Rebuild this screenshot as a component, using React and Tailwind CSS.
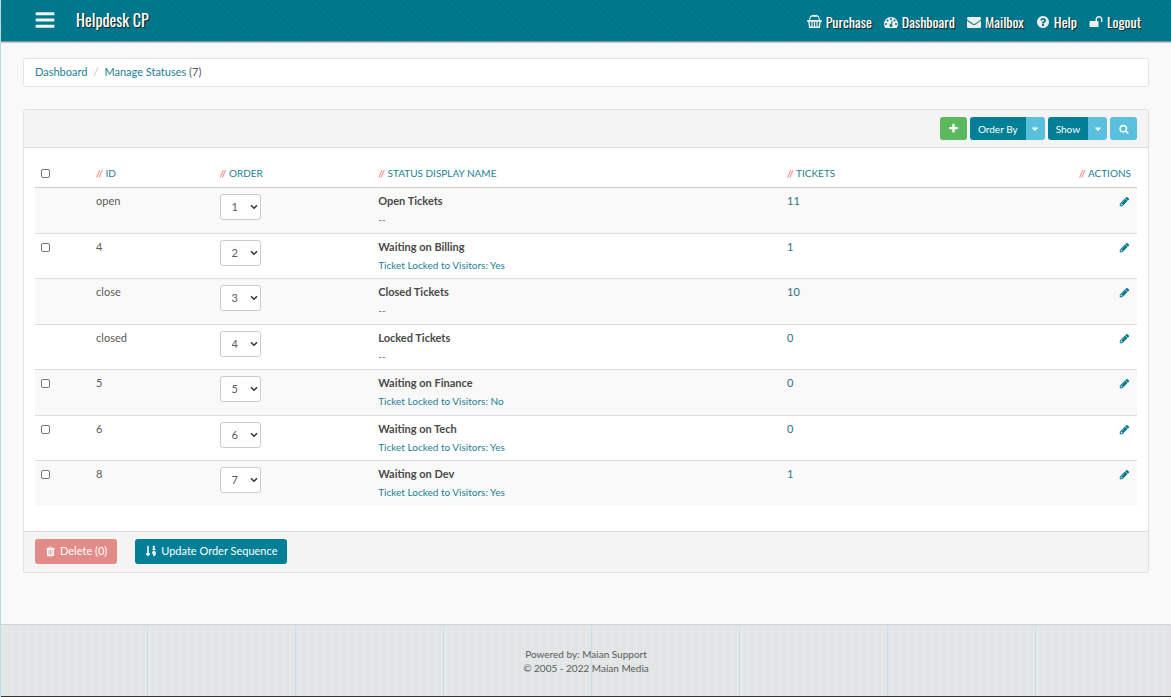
import { useState } from "react";
import { FaSortNumericDown } from "react-icons/fa";

const ICONS = {
    bars: "M1664 1344v128q0 26-19 45t-45 19h-1408q-26 0-45-19t-19-45v-128q0-26 19-45t45-19h1408q26 0 45 19t19 45zm0-512v128q0 26-19 45t-45 19h-1408q-26 0-45-19t-19-45v-128q0-26 19-45t45-19h1408q26 0 45 19t19 45zm0-512v128q0 26-19 45t-45 19h-1408q-26 0-45-19t-19-45v-128q0-26 19-45t45-19h1408q26 0 45 19t19 45z",
    dashboard:
        "M384 1152q0-53-37.5-90.5t-90.5-37.5-90.5 37.5-37.5 90.5 37.5 90.5 90.5 37.5 90.5-37.5 37.5-90.5zm192-448q0-53-37.5-90.5t-90.5-37.5-90.5 37.5-37.5 90.5 37.5 90.5 90.5 37.5 90.5-37.5 37.5-90.5zm428 481l101-382q6-26-7.5-48.5t-38.5-29.5-48 6.5-30 39.5l-101 382q-60 5-107 43.5t-63 98.5q-20 77 20 146t117 89 146-20 89-117q16-60-6-117t-72-91zm660-33q0-53-37.5-90.5t-90.5-37.5-90.5 37.5-37.5 90.5 37.5 90.5 90.5 37.5 90.5-37.5 37.5-90.5zm-640-640q0-53-37.5-90.5t-90.5-37.5-90.5 37.5-37.5 90.5 37.5 90.5 90.5 37.5 90.5-37.5 37.5-90.5zm448 192q0-53-37.5-90.5t-90.5-37.5-90.5 37.5-37.5 90.5 37.5 90.5 90.5 37.5 90.5-37.5 37.5-90.5zm320 448q0 261-141 483-19 29-54 29h-1402q-35 0-54-29-141-221-141-483 0-182 71-348t191-286 286-191 348-71 348 71 286 191 191 286 71 348z",
    envelope:
        "M1792 710v794q0 66-47 113t-113 47h-1472q-66 0-113-47t-47-113v-794q44 49 101 87 362 246 497 345 57 42 92.5 65.5t94.5 48 110 24.5h2q51 0 110-24.5t94.5-48 92.5-65.5q170-123 498-345 57-39 100-87zm0-294q0 79-49 151t-122 123q-376 261-468 325-10 7-42.5 31t-54 38.5-52 32.5-57.5 27-50 9h-2q-23 0-50-9t-57.5-27-52-32.5-54-38.5-42.5-31q-91-64-262-182.5t-205-142.5q-62-42-117-115.5t-55-136.5q0-78 41.5-130t118.5-52h1472q65 0 112.5 47t47.5 113z",
    help: "M1024 1376v-192q0-14-9-23t-23-9h-192q-14 0-23 9t-9 23v192q0 14 9 23t23 9h192q14 0 23-9t9-23zm256-672q0-88-55.5-163t-138.5-116-170-41q-243 0-371 213-15 24 8 42l132 100q7 6 19 6 16 0 25-12 53-68 86-92 34-24 86-24 48 0 85.5 26t37.5 59q0 38-20 61t-68 45q-63 28-115.5 86.5t-52.5 125.5v36q0 14 9 23t23 9h192q14 0 23-9t9-23q0-19 21.5-49.5t54.5-49.5q32-18 49-28.5t46-35 44.5-48 28-60.5 12.5-81zm384 192q0 209-103 385.5t-279.5 279.5-385.5 103-385.5-103-279.5-279.5-103-385.5 103-385.5 279.5-279.5 385.5-103 385.5 103 279.5 279.5 103 385.5z",
    unlock:
        "M1728 576v256q0 26-19 45t-45 19h-64q-26 0-45-19t-19-45v-256q0-106-75-181t-181-75-181 75-75 181v192h96q40 0 68 28t28 68v576q0 40-28 68t-68 28h-960q-40 0-68-28t-28-68v-576q0-40 28-68t68-28h672v-192q0-185 131.5-316.5t316.5-131.5 316.5 131.5 131.5 316.5z",
    plus: "M1600 736v192q0 40-28 68t-68 28h-416v416q0 40-28 68t-68 28h-192q-40 0-68-28t-28-68v-416h-416q-40 0-68-28t-28-68v-192q0-40 28-68t68-28h416v-416q0-40 28-68t68-28h192q40 0 68 28t28 68v416h416q40 0 68 28t28 68z",
    search:
        "M1216 832q0-185-131.5-316.5t-316.5-131.5-316.5 131.5-131.5 316.5 131.5 316.5 316.5 131.5 316.5-131.5 131.5-316.5zm512 832q0 52-38 90t-90 38q-54 0-90-38l-343-342q-179 124-399 124-143 0-273.5-55.5t-225-150-150-225-55.5-273.5 55.5-273.5 150-225 225-150 273.5-55.5 273.5 55.5 225 150 150 225 55.5 273.5q0 220-124 399l343 343q37 37 37 90z",
    pencil:
        "M491 1536l91-91-235-235-91 91v107h128v128h107zm523-928q0-22-22-22-10 0-17 7l-542 542q-7 7-7 17 0 22 22 22 10 0 17-7l542-542q7-7 7-17zm-54-192l416 416-832 832h-416v-416zm683 96q0 53-37 90l-166 166-416-416 166-165q36-38 90-38 53 0 91 38l235 234q37 39 37 91z",
    trash: "M704 1376v-704q0-14-9-23t-23-9h-64q-14 0-23 9t-9 23v704q0 14 9 23t23 9h64q14 0 23-9t9-23zm256 0v-704q0-14-9-23t-23-9h-64q-14 0-23 9t-9 23v704q0 14 9 23t23 9h64q14 0 23-9t9-23zm256 0v-704q0-14-9-23t-23-9h-64q-14 0-23 9t-9 23v704q0 14 9 23t23 9h64q14 0 23-9t9-23zm-544-992h448l-48-117q-7-9-17-11h-317q-10 2-17 11zm928 32v64q0 14-9 23t-23 9h-96v948q0 83-47 143.5t-113 60.5h-832q-66 0-113-58.5t-47-141.5v-952h-96q-14 0-23-9t-9-23v-64q0-14 9-23t23-9h309l70-167q15-37 54-63t79-26h320q40 0 79 26t54 63l70 167h309q14 0 23 9t9 23z",
    caret: "M1408 704q0 26-19 45l-448 448q-19 19-45 19t-45-19l-448-448q-19-19-19-45t19-45 45-19h896q26 0 45 19t19 45z",
};

function Icon({ name, className }) {
    return (
        <svg viewBox="0 0 1792 1792" fill="currentColor" aria-hidden="true" className={className}>
            <path d={ICONS[name]} />
        </svg>
    );
}

function BasketIcon({ className }) {
    return (
        <svg viewBox="0 0 16 16" fill="none" stroke="currentColor" aria-hidden="true" className={className}>
            <path d="M2.6 7L3.4 3.6Q3.8 2 5.4 2h5.2q1.6 0 2 1.6L13.4 7" strokeWidth="1.2" />
            <path d="M5.4 1.9h5.2" strokeWidth="1.9" />
            <path d="M.2 7.4h15.6" strokeWidth="2" />
            <path d="M1.9 8l1 6.2h10.2l1-6.2" strokeWidth="1.5" />
            <path d="M5.3 8.2v5.6M8 8.2v5.6M10.7 8.2v5.6" strokeWidth="1.3" />
        </svg>
    );
}

const navLinks = [
    { label: "Purchase", icon: "basket" },
    { label: "Dashboard", icon: "dashboard" },
    { label: "Mailbox", icon: "envelope" },
    { label: "Help", icon: "help" },
    { label: "Logout", icon: "unlock" },
];

const initialStatuses = [
    { id: "open", name: "Open Tickets", note: "--", tickets: 11, fixed: true },
    { id: "4", name: "Waiting on Billing", note: "Ticket Locked to Visitors: Yes", tickets: 1 },
    { id: "close", name: "Closed Tickets", note: "--", tickets: 10, fixed: true },
    { id: "closed", name: "Locked Tickets", note: "--", tickets: 0, fixed: true },
    { id: "5", name: "Waiting on Finance", note: "Ticket Locked to Visitors: No", tickets: 0 },
    { id: "6", name: "Waiting on Tech", note: "Ticket Locked to Visitors: Yes", tickets: 0 },
    { id: "8", name: "Waiting on Dev", note: "Ticket Locked to Visitors: Yes", tickets: 1 },
];

function Heading({ children }) {
    return (
        <>
            <span className="text-[#f0625a]">//</span> {children}
        </>
    );
}

function SplitButton({ label }) {
    return (
        <div className="flex">
            <button className="h-[23px] rounded-l-[3px] bg-[#007f96] px-2 text-[10px] text-white">{label}</button>
            <button
                aria-label={`${label} options`}
                className="flex h-[23px] w-[19px] items-center justify-center rounded-r-[3px] bg-[#5bc0de] text-white"
            >
                <Icon name="caret" className="size-[10px]" />
            </button>
        </div>
    );
}

export default function App() {
    const [checked, setChecked] = useState([]);
    const [orders, setOrders] = useState(initialStatuses.map((_, i) => i + 1));

    const selectable = initialStatuses.filter((s) => !s.fixed).map((s) => s.id);

    const toggle = (id) => {
        setChecked(checked.includes(id) ? checked.filter((c) => c !== id) : [...checked, id]);
    };

    const changeOrder = (index, value) => {
        const updated = [...orders];
        updated[index] = Number(value);
        setOrders(updated);
    };

    const box =
        "block size-[9px] appearance-none rounded-[2px] border border-[#767676] bg-white checked:bg-[#007f96]";

    return (
        <div className="flex min-h-screen flex-col border-l border-[#b9dbe3] bg-[#f9f9f9] font-['Lato','Open_Sans',sans-serif] text-[11px] leading-[14px] text-[#5a5a5a]">
            <header className="flex h-[42px] items-center justify-between border-b border-[#6b9aa5] bg-[#00788d] bg-[repeating-linear-gradient(45deg,#0000_0_2px,#00000008_2px_4px)] pr-[30px] pb-[2px] pl-[33px] font-['Oswald','Roboto_Condensed','Liberation_Sans_Narrow',sans-serif] text-white shadow-[0_1px_1px_#d5c8cb] [text-shadow:1px_1px_1px_#222]">
                <div className="flex items-center gap-5">
                    <button aria-label="Menu">
                        <Icon name="bars" className="size-[22px] text-[#eef5f6]" />
                    </button>
                    <span className="text-[16px]">Helpdesk CP</span>
                </div>
                <nav className="flex items-center gap-3 pt-1 text-[14px]">
                    {navLinks.map((link) => (
                        <a key={link.label} href="#" className="flex items-center gap-1">
                            {link.icon === "basket" ? (
                                <BasketIcon className="size-[15px] text-[#eee]" />
                            ) : (
                                <Icon name={link.icon} className="size-[14px] text-[#eee]" />
                            )}
                            {link.label}
                        </a>
                    ))}
                </nav>
            </header>

            <main className="flex-1 px-[22px] pt-4 pb-[51px]">
                <nav className="flex h-[29px] items-center gap-[6px] rounded-[3px] border border-[#e5e5e5] bg-white px-[11px] pb-[2px]">
                    <a href="#" className="text-[#1c7f95]">Dashboard</a>
                    <span className="text-[#bbb]">/</span>
                    <span>
                        <a href="#" className="text-[#1c7f95]">Manage Statuses</a> (7)
                    </span>
                </nav>

                <section className="mt-[22px] rounded-[3px] border border-[#e0e0e0] bg-white">
                    <div className="flex h-[38px] items-center justify-end gap-[3px] rounded-t-[3px] border-b border-[#ddd] bg-[#f4f4f4] px-[11px]">
                        <button
                            aria-label="Add status"
                            className="flex h-[23px] w-[27px] items-center justify-center rounded-[3px] bg-[#5cb85c] text-white"
                        >
                            <Icon name="plus" className="size-[11px]" />
                        </button>
                        <SplitButton label="Order By" />
                        <SplitButton label="Show" />
                        <button
                            aria-label="Search"
                            className="flex h-[23px] w-[27px] items-center justify-center rounded-[3px] bg-[#5bc0de] text-white"
                        >
                            <Icon name="search" className="size-[10px]" />
                        </button>
                    </div>

                    <div className="px-[11px] pt-3 pb-[25px]">
                        <table className="w-full table-fixed text-left">
                            <thead>
                                <tr className="h-[27px] border-b border-[#ccc] text-[10px] text-[#1c7f95] [&>th]:px-[6px] [&>th]:font-normal">
                                    <th className="w-[5%]">
                                        <input
                                            type="checkbox"
                                            aria-label="Select all"
                                            className={box}
                                            checked={checked.length === selectable.length}
                                            onChange={(e) => setChecked(e.target.checked ? selectable : [])}
                                        />
                                    </th>
                                    <th className="w-[11.2%]"><Heading>ID</Heading></th>
                                    <th className="w-[14.4%]"><Heading>ORDER</Heading></th>
                                    <th className="w-[37.1%]"><Heading>STATUS DISPLAY NAME</Heading></th>
                                    <th><Heading>TICKETS</Heading></th>
                                    <th className="text-right"><Heading>ACTIONS</Heading></th>
                                </tr>
                            </thead>
                            <tbody>
                                {initialStatuses.map((s, i) => (
                                    <tr
                                        key={s.id}
                                        className="border-t border-[#ddd] align-top odd:h-[46px] odd:bg-[#f9f9f9] even:h-[45px] [&>td]:px-[6px] [&>td]:pt-[6px]"
                                    >
                                        <td>
                                            {!s.fixed && (
                                                <input
                                                    type="checkbox"
                                                    aria-label={`Select ${s.name}`}
                                                    className={`${box} mt-[3px]`}
                                                    checked={checked.includes(s.id)}
                                                    onChange={() => toggle(s.id)}
                                                />
                                            )}
                                        </td>
                                        <td>{s.id}</td>
                                        <td>
                                            <div className="relative w-[41px]">
                                                <select
                                                    aria-label={`Order of ${s.name}`}
                                                    value={orders[i]}
                                                    onChange={(e) => changeOrder(i, e.target.value)}
                                                    className="block h-[26px] w-full appearance-none rounded-[3px] border border-[#ccc] bg-white pl-[11px] text-[11px]"
                                                >
                                                    {orders.map((_, n) => (
                                                        <option key={n} value={n + 1}>{n + 1}</option>
                                                    ))}
                                                </select>
                                                <svg
                                                    viewBox="0 0 8 6"
                                                    fill="none"
                                                    stroke="#333"
                                                    strokeWidth="1.5"
                                                    aria-hidden="true"
                                                    className="pointer-events-none absolute top-[10px] right-[3px] h-[6px] w-2"
                                                >
                                                    <path d="M1 1.2l3 3 3-3" />
                                                </svg>
                                            </div>
                                        </td>
                                        <td>
                                            <b className="block text-[#4a4a4a]">{s.name}</b>
                                            <span className="mt-1 block text-[10px] text-[#1c7f95]">{s.note}</span>
                                        </td>
                                        <td>
                                            <a href="#" className="text-[#2c7486]">{s.tickets}</a>
                                        </td>
                                        <td>
                                            <a href="#" aria-label={`Edit ${s.name}`} className="ml-auto block w-3 pt-[2px] text-[#00768c]">
                                                <Icon name="pencil" className="size-[11px]" />
                                            </a>
                                        </td>
                                    </tr>
                                ))}
                            </tbody>
                        </table>
                    </div>

                    <div className="flex h-[41px] items-center gap-[18px] rounded-b-[3px] border-t border-[#ddd] bg-[#f4f4f4] px-[11px] pb-[2px]">
                        <button
                            disabled={checked.length === 0}
                            className="flex h-[25px] items-center gap-1 rounded-[3px] bg-[#d9534f] px-[10px] text-white disabled:bg-[#e38b88]"
                        >
                            <Icon name="trash" className="size-[11px]" />
                            Delete ({checked.length})
                        </button>
                        <button className="flex h-[25px] items-center gap-1 rounded-[3px] bg-[#007f96] px-[10px] text-white">
                            <FaSortNumericDown className="size-3" />
                            Update Order Sequence
                        </button>
                    </div>
                </section>
            </main>

            <footer className="border-t border-b border-t-[#d0d4d4] border-b-[#333] bg-[#e3e7e8] bg-[repeating-linear-gradient(90deg,#0000_0_146px,#cddfe6_146px_147px,#0000_147px_148px),repeating-linear-gradient(90deg,#0000_0_7px,#dfe4e5_7px_8px),repeating-linear-gradient(0deg,#0000_0_7px,#dfe4e5_7px_8px)] pt-[22px] pb-[21px] text-center text-[10px]">
                <p>Powered by: <a href="#">Maian Support</a></p>
                <p>© 2005 - 2022 <a href="#">Maian Media</a></p>
            </footer>
        </div>
    );
}
